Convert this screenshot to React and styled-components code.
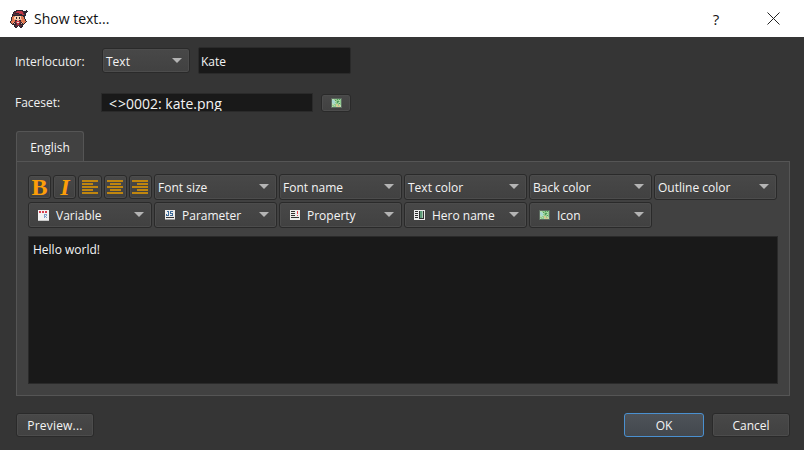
import React from "react";
import styled, { createGlobalStyle } from "styled-components";

const GlobalStyle = createGlobalStyle`
  html, body { margin: 0; padding: 0; background: #353535; }
  body { font-family: "Open Sans", "Noto Sans", sans-serif; font-size: 12px; color: #f4f4f4; }
`;

const Dialog = styled.div`
  width: 804px;
  height: 450px;
  display: flex;
  flex-direction: column;
  overflow: hidden;
`;

const TitleBar = styled.div`
  height: 37px;
  background: #fff;
  display: flex;
  align-items: center;
  padding: 0 8px 0 10px;
  color: #111;
  flex: none;
`;

const TitleText = styled.div`
  font-size: 14px;
  margin-left: 6px;
  flex: 1;
`;

const HelpMark = styled.div`
  width: 46px;
  text-align: center;
  font-size: 15px;
  margin-right: 11px;
`;

const CloseBox = styled.div`
  width: 46px;
  display: flex;
  justify-content: center;
`;

const Body = styled.div`
  flex: 1;
  background: #353535;
  padding: 10px 14px 14px 16px;
  display: flex;
  flex-direction: column;
`;

const FormRow = styled.div`
  display: flex;
  align-items: center;
  height: ${p => p.$h}px;
  margin-bottom: ${p => p.$mb || 0}px;
`;

const Label = styled.div`
  width: 87px;
  margin-left: -1px;
  padding-top: ${p => p.$pt || 0}px;
  font-size: 12px;
  color: #f0f0f0;
`;

const ButtonFace = styled.div`
  box-sizing: border-box;
  display: flex;
  align-items: center;
  height: ${p => p.$h || 26}px;
  border: 1px solid #2a2a2a;
  box-shadow: inset 0 0 0 1px #4c4c4c;
  border-radius: 3px;
  background: linear-gradient(#484848, #414141);
  color: #f4f4f4;
  font-size: 12px;
`;

const Dropdown = styled(ButtonFace)`
  width: ${p => (p.$w ? `${p.$w}px` : "auto")};
  padding: ${p => p.$pt || 0}px 7px 0 3px;
  justify-content: space-between;
  white-space: nowrap;
`;

const Arrow = styled.div`
  width: 0;
  height: 0;
  margin-top: -2px;
  border-left: 5px solid transparent;
  border-right: 5px solid transparent;
  border-top: 5px solid #b4b4b4;
  flex: none;
`;

const TextField = styled.div`
  box-sizing: border-box;
  background: #191919;
  border: 1px solid #2a2a2a;
  border-radius: ${p => p.$radius || 0}px;
  display: flex;
  align-items: center;
  width: ${p => p.$w}px;
  height: ${p => p.$h}px;
  margin-left: ${p => p.$ml || 0}px;
  padding: ${p => p.$pt || 0}px 0 0 ${p => p.$pl || 2}px;
  font-size: ${p => p.$fs || 12}px;
  color: #f4f4f4;
  overflow: hidden;
`;

const AngleGap = styled.span`
  margin: 0 1px;
`;

const SmallButton = styled(ButtonFace)`
  width: 30px;
  margin-left: 8px;
  justify-content: center;
`;

const TabBar = styled.div`
  display: flex;
  height: 30px;
  margin-top: 19px;
  flex: none;
`;

const Tab = styled.div`
  box-sizing: border-box;
  width: 68px;
  height: 30px;
  margin-bottom: -1px;
  padding-top: 1px;
  background: #414141;
  border: 1px solid #555;
  border-bottom: none;
  border-radius: 3px 3px 0 0;
  display: flex;
  align-items: center;
  justify-content: center;
  color: #f4f4f4;
  position: relative;
  z-index: 1;
`;

const Pane = styled.div`
  box-sizing: border-box;
  height: 235px;
  background: #414141;
  border: 1px solid #555;
  padding: 12px 11px 10px 11px;
  display: flex;
  flex-direction: column;
`;

const Toolbar = styled.div`
  display: grid;
  grid-template-columns: 124px repeat(5, 123px);
  column-gap: 2px;
  row-gap: 2px;
  grid-auto-rows: 26px;
  align-items: center;
`;

const FormatGroup = styled.div`
  display: flex;
  gap: 2px;
`;

const FormatButton = styled(ButtonFace)`
  flex: 1;
  height: 24px;
  justify-content: center;
  padding: 0;
`;

const BoldGlyph = styled.span`
  font-family: "Liberation Serif", serif;
  font-weight: 700;
  font-style: ${p => (p.$italic ? "italic" : "normal")};
  font-size: 24px;
  line-height: 1;
  color: #fd9e08;
`;

const IconDropdown = styled(Dropdown)`
  padding-left: 9px;
`;

const IconLabel = styled.div`
  display: flex;
  align-items: center;
  gap: 7px;
`;

const IconSlot = styled.div`
  width: 11px;
  height: 11px;
  display: flex;
  align-items: center;
  justify-content: center;
`;

const Editor = styled.div`
  box-sizing: border-box;
  height: 148px;
  margin-top: 8px;
  width: 750px;
  background: #191919;
  border: 1px solid #2a2a2a;
  padding: 4px 4px;
  font-size: 12px;
  color: #f4f4f4;
  line-height: 18px;
`;

const Footer = styled.div`
  display: flex;
  align-items: center;
  justify-content: space-between;
  margin-top: 17px;
`;

const Buttons = styled.div`
  display: flex;
  gap: 8px;
`;

const PushButton = styled(ButtonFace)`
  width: ${p => p.$w}px;
  justify-content: center;
  letter-spacing: ${p => p.$spacing || 0}px;
  ${p =>
    p.$primary &&
    `
    border-color: #4a90d0;
    box-shadow: none;
    background: linear-gradient(#4e5359, #43484e);
  `}
`;

// Pixel drawings: every character maps to a colour, "." is transparent
const Sprite = ({ rows, colors }) => (
  <svg
    width={rows[0].length}
    height={rows.length}
    viewBox={`0 0 ${rows[0].length} ${rows.length}`}
    shapeRendering="crispEdges"
  >
    {rows.flatMap((row, y) =>
      row.split("").map((c, x) =>
        c === "." ? null : <rect key={`${x}-${y}`} x={x} y={y} width="1" height="1" fill={colors[c]} />
      )
    )}
  </svg>
);

const kate = {
  colors: { k: "#2c2630", r: "#c23644", p: "#f0a890", s: "#f8d0b0", o: "#e07850", d: "#5a2c38", w: "#ece0d8" },
  rows: [
    "......kkkkkkk...k.",
    "....kkdrrrrrdkkkkk",
    "...kddrrrrrrrdkkk.",
    "...kdkkkkrrrrdkk..",
    "..kddddddkkkrrdk..",
    "..kkkkkkkkkkkkkk..",
    "..koossssssookk...",
    ".koosskssksoook...",
    ".koosskssksoook...",
    ".kooppssssppoook..",
    ".koookkppkkooook..",
    "koooodrrrrdoooook.",
    "koopkdrwwrdkpook..",
    ".kokpkdrrdkpkok...",
    "..kkkkdrrdkkkk....",
    "....kdddddddk.....",
    "....kkdk.kdkk.....",
    ".....kk...kk......",
  ],
};

const mapIcon = {
  colors: { e: "#5d6b60", g: "#8fc98f", b: "#a8d8d0", y: "#d8c890", d: "#4f9a5a", t: "#b8dcb0" },
  rows: [
    "eeeeeeeeeee",
    "ettgggdgdge",
    "ebbtdgggtge",
    "ebbbtgddgge",
    "ebbbggdgtge",
    "etbbtgggdge",
    "ettggyygtge",
    "eggtgyygyte",
    "etgggtyyyte",
    "eeeeeeeeeee",
  ],
};

const variableIcon = {
  colors: { w: "#f2f2f2", r: "#d84050", b: "#7f9fc8", g: "#c8c8c8" },
  rows: [
    "wwwwwwwwwww",
    "wrrwrrwrrww",
    "wrrwrrwrrww",
    "wwwwwwwwwww",
    "wwwwwwbbbww",
    "wwwwwwbwbww",
    "wwwwwwbbwww",
    "wwwwwwbwbww",
    "wwwwwwwwwww",
    "wwwwwwwwwww",
    "ggggggggggg",
  ],
};

const parameterIcon = {
  colors: { w: "#ececec", k: "#3d6a98", g: "#9a9a9a", d: "#333333" },
  rows: [
    "wwwwwwwwww",
    "wwkkwkkkww",
    "wwwkwkwwww",
    "wwwkwkkkww",
    "wkwkwwwkww",
    "wkkkwkkkww",
    "wwwwwwwwww",
    "wddddddddw",
    "wwwwwwwwww",
    "gggggggggg",
  ],
};

const propertyIcon = {
  colors: { w: "#ececec", k: "#333333", r: "#e04050" },
  rows: [
    "wwwwwwwwww",
    "wkkkkwwrww",
    "wwwwwwwrww",
    "wkkkkwwrww",
    "wwwwwwwwww",
    "wkkkkwwrww",
    "wwwwwwwwww",
    "wkkkkkkkkw",
    "wwwwwwwwww",
    "wwwwwwwwww",
  ],
};

const heroIcon = {
  colors: { w: "#ececec", k: "#2f2f2f", g: "#5d9a78", l: "#a8c8b0" },
  rows: [
    "wwwwwwwwwww",
    "wkkkwkgglkw",
    "wwwwwkgglkw",
    "wkkkwkgglkw",
    "wwwwwkgglkw",
    "wkkkwkgglkw",
    "wwwwwkgglkw",
    "wkkkwkgglkw",
    "wwwwwkkkkkw",
    "wwwwwwwwwww",
  ],
};

const AlignIcon = ({ kind }) => {
  const bars = [0, 1, 2, 3, 4].map(i => {
    const short = i % 2 === 1;
    const w = short ? 11 : 16;
    const x = !short || kind === "left" ? 0 : kind === "center" ? 2.5 : 5;
    return <rect key={i} x={x} y={i * 3} width={w} height="2" fill="#c0860f" />;
  });
  return (
    <svg width="16" height="14" viewBox="0 0 16 14" shapeRendering="crispEdges">
      {bars}
    </svg>
  );
};

const firstRow = ["Font size", "Font name", "Text color", "Back color", "Outline color"];
const secondRow = [
  { label: "Variable", icon: variableIcon },
  { label: "Parameter", icon: parameterIcon },
  { label: "Property", icon: propertyIcon },
  { label: "Hero name", icon: heroIcon },
  { label: "Icon", icon: mapIcon },
];

const App = () => (
  <Dialog>
    <GlobalStyle />
    <TitleBar>
      <Sprite {...kate} />
      <TitleText>Show text...</TitleText>
      <HelpMark>?</HelpMark>
      <CloseBox>
        <svg width="13" height="13" viewBox="0 0 13 13">
          <path d="M0.5 0.5 L12.5 12.5 M12.5 0.5 L0.5 12.5" stroke="#222" strokeWidth="1" fill="none" />
        </svg>
      </CloseBox>
    </TitleBar>
    <Body>
      <FormRow $h={27} $mb={19}>
        <Label $pt={1}>Interlocutor:</Label>
        <Dropdown $w={88} $h={25} $pt={1}>
          Text
          <Arrow />
        </Dropdown>
        <TextField $w={153} $h={27} $ml={8} $radius={2} $pt={1}>
          Kate
        </TextField>
      </FormRow>
      <FormRow $h={19}>
        <Label>Faceset:</Label>
        <TextField $w={212} $h={19} $ml={-1} $pl={6} $fs={14} $pt={1}>
          <AngleGap>&lt;</AngleGap>&gt;0002: kate.png
        </TextField>
        <SmallButton $h={18}>
          <Sprite {...mapIcon} />
        </SmallButton>
      </FormRow>
      <TabBar>
        <Tab>English</Tab>
      </TabBar>
      <Pane>
        <Toolbar>
          <FormatGroup>
            <FormatButton><BoldGlyph>B</BoldGlyph></FormatButton>
            <FormatButton><BoldGlyph $italic>I</BoldGlyph></FormatButton>
            <FormatButton><AlignIcon kind="left" /></FormatButton>
            <FormatButton><AlignIcon kind="center" /></FormatButton>
            <FormatButton><AlignIcon kind="right" /></FormatButton>
          </FormatGroup>
          {firstRow.map(label => (
            <Dropdown key={label}>
              {label}
              <Arrow />
            </Dropdown>
          ))}
          {secondRow.map(({ label, icon }) => (
            <IconDropdown key={label}>
              <IconLabel>
                <IconSlot>
                  <Sprite {...icon} />
                </IconSlot>
                {label}
              </IconLabel>
              <Arrow />
            </IconDropdown>
          ))}
        </Toolbar>
        <Editor>Hello world!</Editor>
      </Pane>
      <Footer>
        <PushButton $w={78} $h={24} $spacing={0.2}>Preview...</PushButton>
        <Buttons>
          <PushButton $w={80} $h={24} $primary>OK</PushButton>
          <PushButton $w={78} $h={24}>Cancel</PushButton>
        </Buttons>
      </Footer>
    </Body>
  </Dialog>
);

export default App;
